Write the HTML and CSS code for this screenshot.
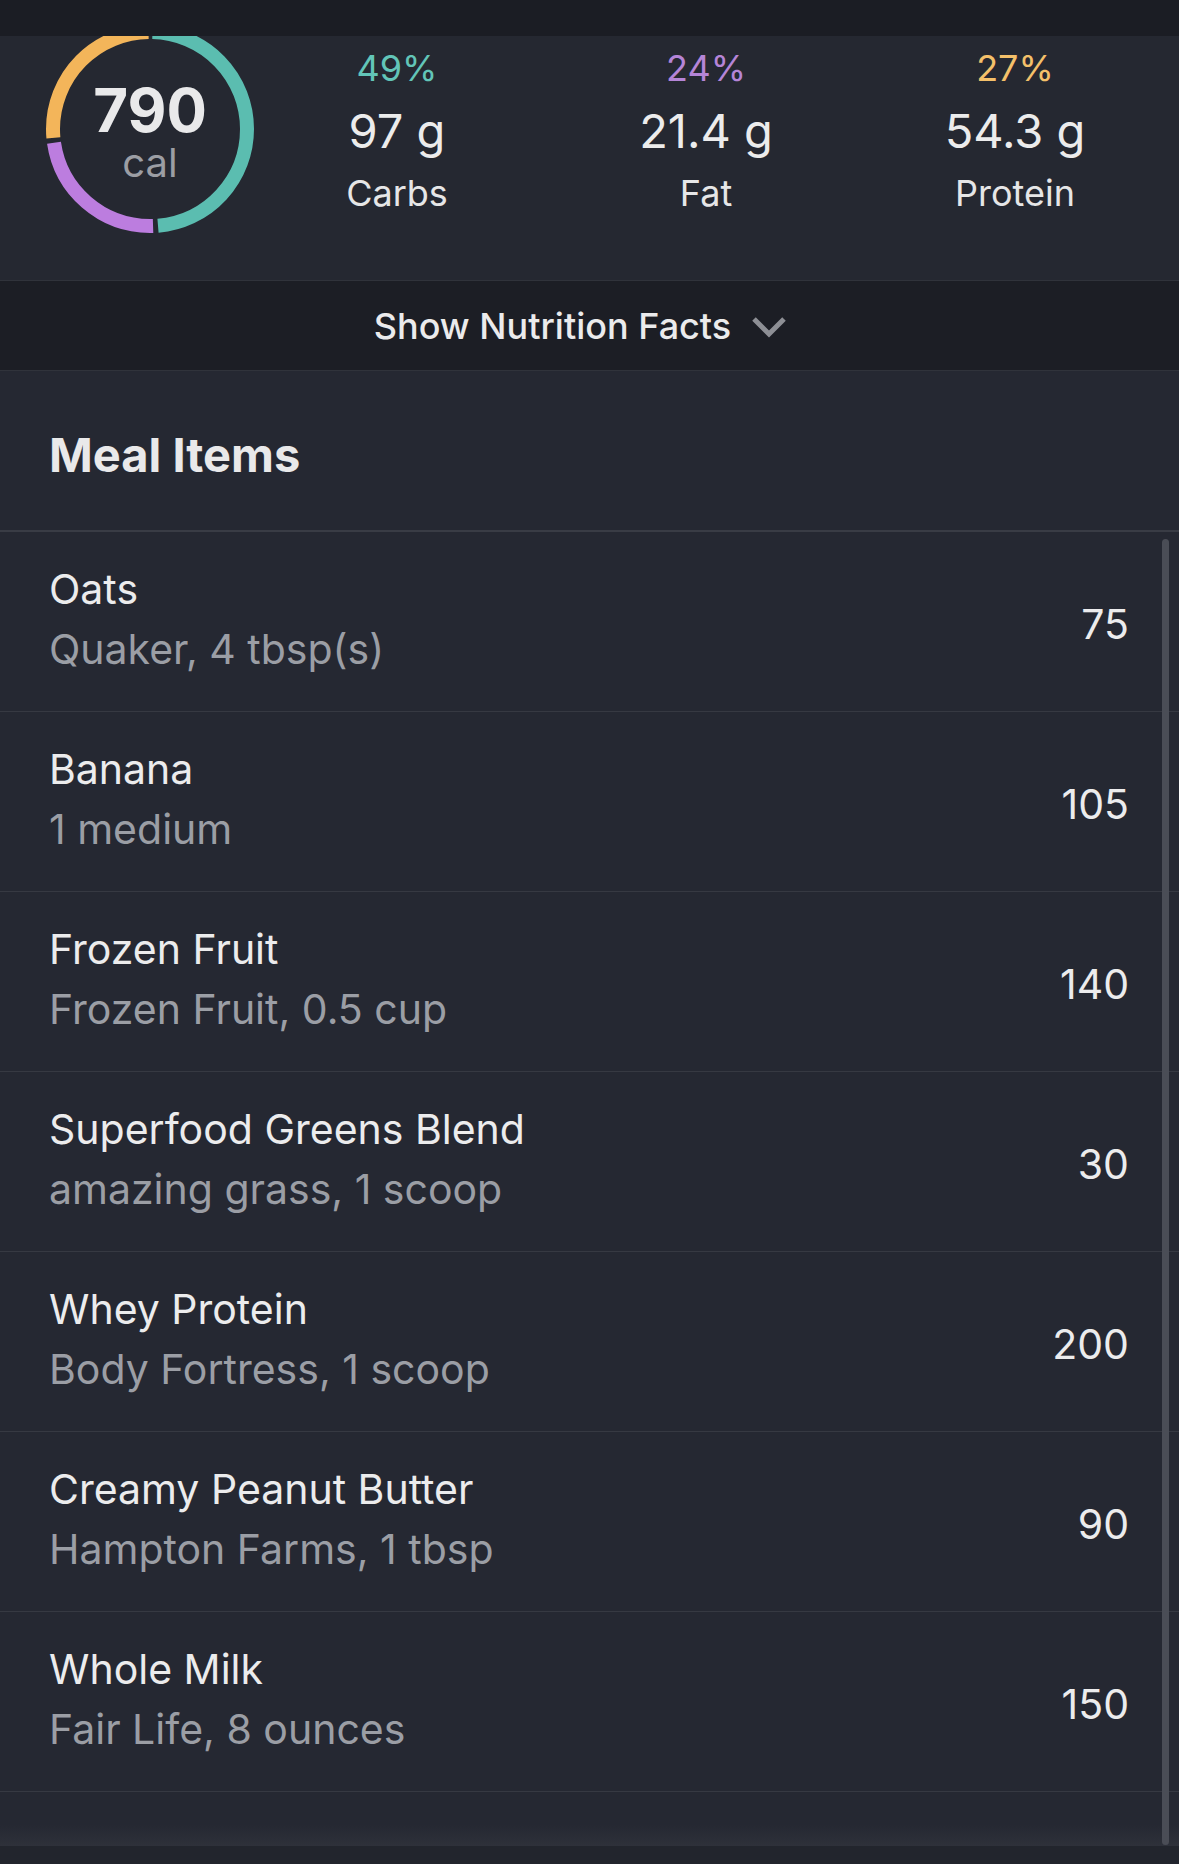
FILE: index.html
```html
<!DOCTYPE html>
<html lang="en">
<head>
    <meta charset="UTF-8">
    <meta name="viewport" content="width=device-width, initial-scale=1.0">
    <title>Meal Details</title>
    <link rel="stylesheet" href="styles.css">
</head>
<body>
    <div class="top-bar"></div>

    <!-- calorie ring and macros -->
    <section class="summary">
        <div class="ring">
            <svg class="ring-svg" viewBox="0 0 208 208" width="208" height="208">
                <g transform="rotate(-90 104 104)" fill="none" stroke-width="14">
                    <circle cx="104" cy="104" r="97" stroke="#5bbdb0" stroke-dasharray="293.6 609.5" stroke-dashoffset="-2.5"/>
                    <circle cx="104" cy="104" r="97" stroke="#bc7ddf" stroke-dasharray="141.3 609.5" stroke-dashoffset="-301.1"/>
                    <circle cx="104" cy="104" r="97" stroke="#f3b55a" stroke-dasharray="159.6 609.5" stroke-dashoffset="-447.4"/>
                </g>
            </svg>
            <div class="ring-label">
                <div class="ring-value">790</div>
                <div class="ring-unit">cal</div>
            </div>
        </div>
        <div class="macros">
            <div class="macro">
                <div class="macro-pct carbs">49%</div>
                <div class="macro-amount">97 g</div>
                <div class="macro-name">Carbs</div>
            </div>
            <div class="macro">
                <div class="macro-pct fat">24%</div>
                <div class="macro-amount">21.4 g</div>
                <div class="macro-name">Fat</div>
            </div>
            <div class="macro">
                <div class="macro-pct protein">27%</div>
                <div class="macro-amount">54.3 g</div>
                <div class="macro-name">Protein</div>
            </div>
        </div>
    </section>

    <div class="facts-toggle">
        <span>Show Nutrition Facts</span>
        <svg class="chevron" viewBox="0 0 36 22" width="36" height="22">
            <path d="M3 3 L18 18 L33 3" fill="none" stroke="#8d8f95" stroke-width="5" stroke-linecap="butt"/>
        </svg>
    </div>

    <!-- meal items -->
    <section class="meal">
        <h2 class="meal-title">Meal Items</h2>
        <ul class="items">
            <li class="item">
                <div class="item-text">
                    <div class="item-name">Oats</div>
                    <div class="item-desc">Quaker, 4 tbsp(s)</div>
                </div>
                <div class="item-cal">75</div>
            </li>
            <li class="item">
                <div class="item-text">
                    <div class="item-name">Banana</div>
                    <div class="item-desc">1 medium</div>
                </div>
                <div class="item-cal">105</div>
            </li>
            <li class="item">
                <div class="item-text">
                    <div class="item-name">Frozen Fruit</div>
                    <div class="item-desc">Frozen Fruit, 0.5 cup</div>
                </div>
                <div class="item-cal">140</div>
            </li>
            <li class="item">
                <div class="item-text">
                    <div class="item-name">Superfood Greens Blend</div>
                    <div class="item-desc">amazing grass, 1 scoop</div>
                </div>
                <div class="item-cal">30</div>
            </li>
            <li class="item">
                <div class="item-text">
                    <div class="item-name">Whey Protein</div>
                    <div class="item-desc">Body Fortress, 1 scoop</div>
                </div>
                <div class="item-cal">200</div>
            </li>
            <li class="item">
                <div class="item-text">
                    <div class="item-name">Creamy Peanut Butter</div>
                    <div class="item-desc">Hampton Farms, 1 tbsp</div>
                </div>
                <div class="item-cal">90</div>
            </li>
            <li class="item">
                <div class="item-text">
                    <div class="item-name">Whole Milk</div>
                    <div class="item-desc">Fair Life, 8 ounces</div>
                </div>
                <div class="item-cal">150</div>
            </li>
        </ul>
        <div class="items-end"></div>
        <div class="scroll-thumb"></div>
    </section>
    <div class="bottom-bar"></div>
</body>
</html>
```

FILE: styles.css
```css
body {
    margin: 0;
    padding: 0;
    height: 1864px;
    overflow: hidden;
    background-color: #22252d;
    font-family: Inter, "Noto Sans", sans-serif;
    color: #ebebec;
}

.top-bar {
    height: 36px;
    background-color: #1b1d24;
}

/* 上部のサマリー */
.summary {
    display: flex;
    align-items: flex-start;
    height: 244px;
    padding-left: 46px;
    background-color: #252831;
    border-bottom: 1px solid #30333b;
    overflow: hidden;
}

.ring {
    display: grid;
    width: 208px;
    height: 208px;
    margin-top: -11px;
}

.ring-svg,
.ring-label {
    grid-area: 1 / 1;
}

.ring-label {
    display: flex;
    flex-direction: column;
    align-items: center;
    padding-top: 58px;
}

.ring-value {
    font-size: 60px;
    font-weight: 700;
    line-height: 54px;
    color: #e9e9ea;
}

.ring-unit {
    font-size: 40px;
    line-height: 52px;
    color: #9c9ea4;
}

.macros {
    display: grid;
    grid-template-columns: repeat(3, 270px);
    column-gap: 39px;
    margin-left: 8px;
    padding-top: 12px;
}

.macro {
    display: flex;
    flex-direction: column;
    align-items: center;
}

.macro-pct {
    font-size: 36px;
    line-height: 40px;
    margin-bottom: 12px;
}

.macro-pct.carbs { color: #62c5b8; }
.macro-pct.fat { color: #b585d7; }
.macro-pct.protein { color: #f4c06a; }

.macro-amount {
    font-size: 47px;
    line-height: 62px;
    color: #ececec;
}

.macro-name {
    font-size: 36px;
    line-height: 62px;
    color: #e6e6e7;
}

/* 栄養成分の表示ボタン */
.facts-toggle {
    display: flex;
    justify-content: center;
    align-items: center;
    gap: 20px;
    height: 89px;
    padding-right: 18px;
    background-color: #1c1e25;
    border-bottom: 1px solid #30333b;
    font-size: 36px;
    font-weight: 500;
    color: #ebebec;
}

.chevron {
    margin-top: 2px;
}

/* 食事アイテム */
.meal {
    position: relative;
    background-color: #252832;
}

.meal-title {
    margin: 0;
    padding: 56px 49px 47px;
    font-size: 47px;
    font-weight: 700;
    line-height: 56px;
    color: #e9e9ea;
    border-bottom: 2px solid #393c45;
}

.items {
    list-style: none;
    margin: 0;
    padding: 0;
}

.item {
    display: flex;
    justify-content: space-between;
    align-items: center;
    height: 179px;
    padding: 0 50px 0 49px;
    border-bottom: 1px solid #363942;
}

.item-text {
    margin-top: -6px;
}

.item-name {
    font-size: 41px;
    line-height: 60px;
    color: #ececed;
}

.item-desc {
    font-size: 41px;
    line-height: 60px;
    color: #9b9ea5;
}

.item-cal {
    margin-top: 5px;
    font-size: 41px;
    color: #ececed;
}

.items-end {
    height: 54px;
    background: linear-gradient(to bottom, #252832 60%, #2e313a);
}

.scroll-thumb {
    position: absolute;
    top: 168px;
    right: 10px;
    width: 7px;
    height: 1306px;
    border-radius: 4px;
    background-color: #4a4d56;
}

.bottom-bar {
    height: 20px;
    background-color: #22252d;
}
```
